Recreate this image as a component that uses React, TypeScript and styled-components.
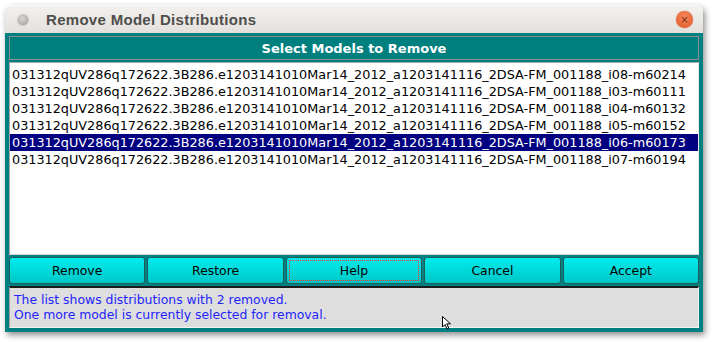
import React from 'react';
import styled, { createGlobalStyle } from 'styled-components';

const GlobalStyle = createGlobalStyle`
  html, body {
    margin: 0;
    padding: 0;
    background: #ffffff;
  }
`;

const Page = styled.div`
  position: relative;
  width: 712px;
  height: 342px;
  padding: 5px 0 0 5px;
  box-sizing: border-box;
`;

const Window = styled.div`
  width: 698px;
  display: flex;
  flex-direction: column;
  border-radius: 6px 6px 0 0;
  box-shadow: 2px 3px 6px rgba(0, 0, 0, 0.45);
`;

const TitleBar = styled.div`
  height: 28px;
  display: flex;
  align-items: center;
  padding: 0 10px 0 12px;
  background: linear-gradient(#f2f1ef, #e3e0dc);
  border-radius: 6px 6px 0 0;
  border-top: 1px solid #fbfbfa;
  box-sizing: border-box;
`;

const MenuDot = styled.span`
  width: 10px;
  height: 10px;
  border-radius: 50%;
  background: radial-gradient(circle at 40% 35%, #d8d6d2, #a19e99);
  border: 1px solid #c9c6c1;
`;

const Title = styled.span`
  margin-left: 17px;
  flex: 1;
  font-family: "Liberation Sans", Arial, sans-serif;
  font-weight: bold;
  font-size: 15px;
  color: #4f4e4b;
  letter-spacing: 0.3px;
`;

const CloseButton = styled.span`
  width: 17px;
  height: 17px;
  border-radius: 50%;
  background: radial-gradient(circle at 50% 35%, #f58a5c, #e0531f);
  box-shadow: 0 0 1px #a6411a;
  display: flex;
  align-items: center;
  justify-content: center;
  color: #7a2c10;
  font-family: "DejaVu Sans", sans-serif;
  font-size: 10px;
  line-height: 1;
`;

const Frame = styled.div`
  background: #008080;
  padding: 3px 4px 4px 4px;
  display: flex;
  flex-direction: column;
  gap: 2px;
  font-family: "DejaVu Sans", Verdana, sans-serif;
`;

const Header = styled.div`
  height: 24px;
  box-sizing: border-box;
  border: 1px solid #8c8c8c;
  background: #007f7f;
  color: #ffffff;
  font-weight: bold;
  font-size: 13px;
  display: flex;
  align-items: center;
  justify-content: center;
`;

const List = styled.div`
  height: 193px;
  box-sizing: border-box;
  background: #ffffff;
  border: 1px solid #a8a8a8;
  border-right-color: #e8e8e8;
  border-bottom-color: #d0d0d0;
  padding-top: 3px;
`;

const Row = styled.div<{ $selected?: boolean }>`
  height: 17px;
  line-height: 17px;
  padding-left: 2px;
  font-size: 12.8px;
  white-space: nowrap;
  background: ${(p) => (p.$selected ? '#000080' : 'transparent')};
  color: ${(p) => (p.$selected ? '#ffffff' : '#000000')};
`;

const ButtonRow = styled.div`
  height: 27px;
  display: grid;
  grid-template-columns: repeat(5, 1fr);
  gap: 2px;
`;

const Button = styled.div<{ $focused?: boolean }>`
  position: relative;
  box-sizing: border-box;
  border: 1px solid #1f5c5c;
  border-radius: 3px;
  background: linear-gradient(#00eded, #00c6c6);
  display: flex;
  align-items: center;
  justify-content: center;
  font-size: 12.4px;
  color: #000000;

  &::after {
    content: '';
    display: ${(p) => (p.$focused ? 'block' : 'none')};
    position: absolute;
    inset: 2px;
    border: 1px dotted #ff2a2a;
  }
`;

const Status = styled.div`
  height: 42px;
  box-sizing: border-box;
  background: #dedede;
  border: 1px solid #f4f4f4;
  border-top: 2px solid #1a1a1a;
  border-left-color: #a0a0a0;
  padding: 4px 0 0 4px;
  color: #2424ff;
  font-size: 12.4px;
  line-height: 15px;
`;

const Cursor = styled.svg`
  position: absolute;
  left: 442px;
  top: 316px;
`;

const models = [
  'i08-m60214',
  'i03-m60111',
  'i04-m60132',
  'i05-m60152',
  'i06-m60173',
  'i07-m60194',
];

const prefix = '031312qUV286q172622.3B286.e1203141010Mar14_2012_a1203141116_2DSA-FM_001188_';

const App: React.FC = () => (
  <>
    <GlobalStyle />
    <Page>
      <Window>
        <TitleBar>
          <MenuDot />
          <Title>Remove Model Distributions</Title>
          <CloseButton>×</CloseButton>
        </TitleBar>
        <Frame>
          <Header>Select Models to Remove</Header>
          <List>
            {models.map((m) => (
              <Row key={m} $selected={m === 'i06-m60173'}>
                {prefix}
                {m}
              </Row>
            ))}
          </List>
          <ButtonRow>
            <Button>Remove</Button>
            <Button>Restore</Button>
            <Button $focused>Help</Button>
            <Button>Cancel</Button>
            <Button>Accept</Button>
          </ButtonRow>
          <Status>
            The list shows distributions with 2 removed.
            <br />
            One more model is currently selected for removal.
          </Status>
        </Frame>
      </Window>
      <Cursor width="12" height="14" viewBox="0 0 12 14">
        <path d="M0.5 0.5 L0.5 11 L3 8.5 L5 13 L6.8 12.2 L4.8 7.8 L8.5 7.8 Z" fill="#ffffff" stroke="#000000" strokeWidth="1" />
      </Cursor>
    </Page>
  </>
);

export default App;
